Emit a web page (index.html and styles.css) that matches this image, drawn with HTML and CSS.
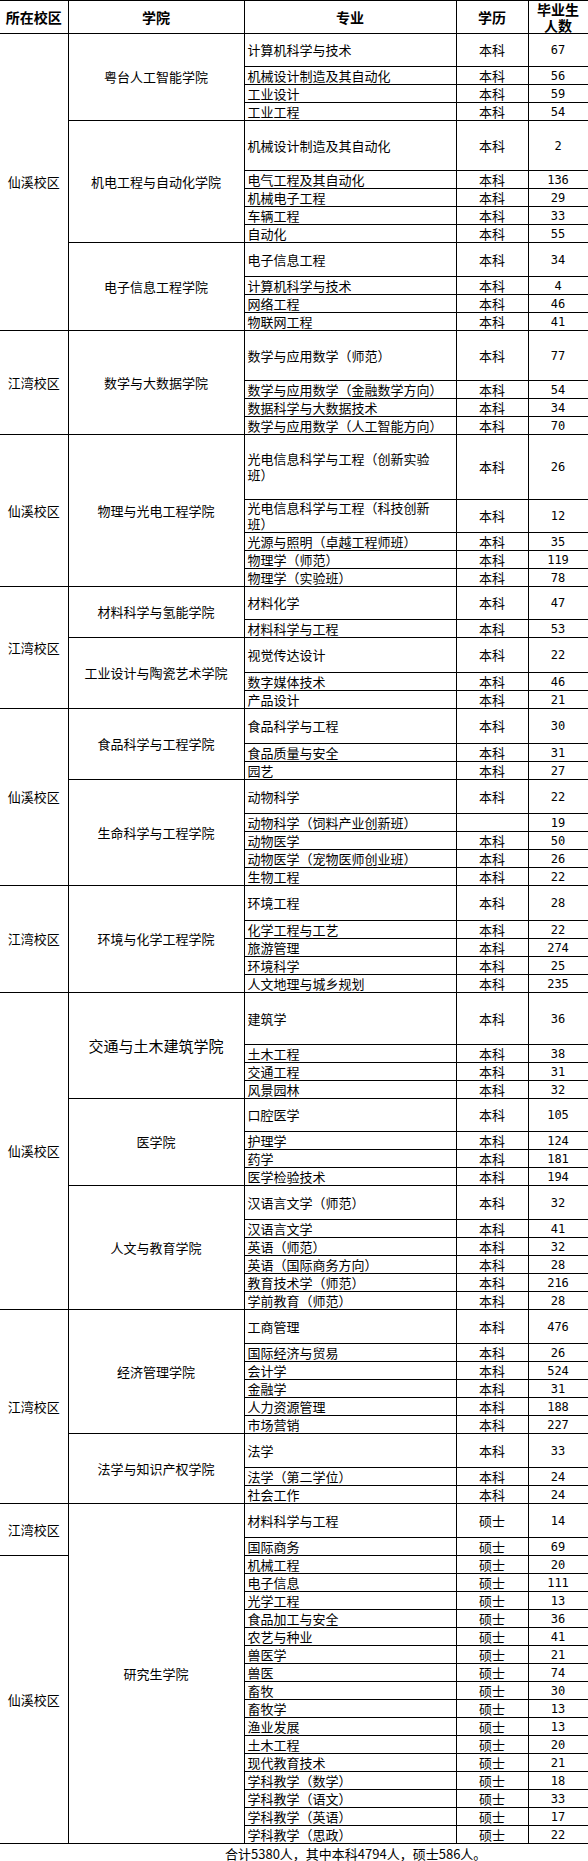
FILE: index.html
```html
<!DOCTYPE html>
<html lang="zh-CN">
<head>
<meta charset="utf-8">
<title>毕业生人数</title>
<link rel="stylesheet" href="styles.css">
</head>
<body>
<table class="grad">
<colgroup><col class="c1"><col class="c2"><col class="c3"><col class="c4"><col class="c5"></colgroup>
<thead>
<tr class="head"><th>所在校区</th><th>学院</th><th>专业</th><th>学历</th><th class="hn">毕业生<br>人数</th></tr>
</thead>
<tbody>
<tr class="h33"><td rowspan="13" class="campus">仙溪校区</td><td rowspan="4" class="college">粤台人工智能学院</td><td class="major">计算机科学与技术</td><td>本科</td><td class="num">67</td></tr>
<tr><td class="major">机械设计制造及其自动化</td><td>本科</td><td class="num">56</td></tr>
<tr><td class="major">工业设计</td><td>本科</td><td class="num">59</td></tr>
<tr><td class="major">工业工程</td><td>本科</td><td class="num">54</td></tr>
<tr class="h50"><td rowspan="5" class="college">机电工程与自动化学院</td><td class="major">机械设计制造及其自动化</td><td>本科</td><td class="num">2</td></tr>
<tr><td class="major">电气工程及其自动化</td><td>本科</td><td class="num">136</td></tr>
<tr><td class="major">机械电子工程</td><td>本科</td><td class="num">29</td></tr>
<tr><td class="major">车辆工程</td><td>本科</td><td class="num">33</td></tr>
<tr><td class="major">自动化</td><td>本科</td><td class="num">55</td></tr>
<tr class="h34"><td rowspan="4" class="college">电子信息工程学院</td><td class="major">电子信息工程</td><td>本科</td><td class="num">34</td></tr>
<tr><td class="major">计算机科学与技术</td><td>本科</td><td class="num">4</td></tr>
<tr><td class="major">网络工程</td><td>本科</td><td class="num">46</td></tr>
<tr><td class="major">物联网工程</td><td>本科</td><td class="num">41</td></tr>
<tr class="h50"><td rowspan="4" class="campus">江湾校区</td><td rowspan="4" class="college">数学与大数据学院</td><td class="major">数学与应用数学（师范）</td><td>本科</td><td class="num">77</td></tr>
<tr><td class="major">数学与应用数学（金融数学方向）</td><td>本科</td><td class="num">54</td></tr>
<tr><td class="major">数据科学与大数据技术</td><td>本科</td><td class="num">34</td></tr>
<tr><td class="major">数学与应用数学（人工智能方向）</td><td>本科</td><td class="num">70</td></tr>
<tr class="h65"><td rowspan="5" class="campus">仙溪校区</td><td rowspan="5" class="college">物理与光电工程学院</td><td class="major two">光电信息科学与工程（创新实验<br>班）</td><td>本科</td><td class="num">26</td></tr>
<tr class="h33"><td class="major two">光电信息科学与工程（科技创新<br>班）</td><td>本科</td><td class="num">12</td></tr>
<tr><td class="major">光源与照明（卓越工程师班）</td><td>本科</td><td class="num">35</td></tr>
<tr><td class="major">物理学（师范）</td><td>本科</td><td class="num">119</td></tr>
<tr><td class="major">物理学（实验班）</td><td>本科</td><td class="num">78</td></tr>
<tr class="h33"><td rowspan="5" class="campus">江湾校区</td><td rowspan="2" class="college">材料科学与氢能学院</td><td class="major">材料化学</td><td>本科</td><td class="num">47</td></tr>
<tr><td class="major">材料科学与工程</td><td>本科</td><td class="num">53</td></tr>
<tr class="h35"><td rowspan="3" class="college">工业设计与陶瓷艺术学院</td><td class="major">视觉传达设计</td><td>本科</td><td class="num">22</td></tr>
<tr><td class="major">数字媒体技术</td><td>本科</td><td class="num">46</td></tr>
<tr><td class="major">产品设计</td><td>本科</td><td class="num">21</td></tr>
<tr class="h35"><td rowspan="8" class="campus">仙溪校区</td><td rowspan="3" class="college">食品科学与工程学院</td><td class="major">食品科学与工程</td><td>本科</td><td class="num">30</td></tr>
<tr><td class="major">食品质量与安全</td><td>本科</td><td class="num">31</td></tr>
<tr><td class="major">园艺</td><td>本科</td><td class="num">27</td></tr>
<tr class="h34"><td rowspan="5" class="college">生命科学与工程学院</td><td class="major">动物科学</td><td>本科</td><td class="num">22</td></tr>
<tr><td class="major">动物科学（饲料产业创新班）</td><td></td><td class="num">19</td></tr>
<tr><td class="major">动物医学</td><td>本科</td><td class="num">50</td></tr>
<tr><td class="major">动物医学（宠物医师创业班）</td><td>本科</td><td class="num">26</td></tr>
<tr><td class="major">生物工程</td><td>本科</td><td class="num">22</td></tr>
<tr class="h35"><td rowspan="5" class="campus">江湾校区</td><td rowspan="5" class="college">环境与化学工程学院</td><td class="major">环境工程</td><td>本科</td><td class="num">28</td></tr>
<tr><td class="major">化学工程与工艺</td><td>本科</td><td class="num">22</td></tr>
<tr><td class="major">旅游管理</td><td>本科</td><td class="num">274</td></tr>
<tr><td class="major">环境科学</td><td>本科</td><td class="num">25</td></tr>
<tr><td class="major">人文地理与城乡规划</td><td>本科</td><td class="num">235</td></tr>
<tr class="h52"><td rowspan="14" class="campus">仙溪校区</td><td rowspan="4" class="college big">交通与土木建筑学院</td><td class="major">建筑学</td><td>本科</td><td class="num">36</td></tr>
<tr><td class="major">土木工程</td><td>本科</td><td class="num">38</td></tr>
<tr><td class="major">交通工程</td><td>本科</td><td class="num">31</td></tr>
<tr><td class="major">风景园林</td><td>本科</td><td class="num">32</td></tr>
<tr class="h33"><td rowspan="4" class="college">医学院</td><td class="major">口腔医学</td><td>本科</td><td class="num">105</td></tr>
<tr><td class="major">护理学</td><td>本科</td><td class="num">124</td></tr>
<tr><td class="major">药学</td><td>本科</td><td class="num">181</td></tr>
<tr><td class="major">医学检验技术</td><td>本科</td><td class="num">194</td></tr>
<tr class="h34"><td rowspan="6" class="college">人文与教育学院</td><td class="major">汉语言文学（师范）</td><td>本科</td><td class="num">32</td></tr>
<tr><td class="major">汉语言文学</td><td>本科</td><td class="num">41</td></tr>
<tr><td class="major">英语（师范）</td><td>本科</td><td class="num">32</td></tr>
<tr><td class="major">英语（国际商务方向）</td><td>本科</td><td class="num">28</td></tr>
<tr><td class="major">教育技术学（师范）</td><td>本科</td><td class="num">216</td></tr>
<tr><td class="major">学前教育（师范）</td><td>本科</td><td class="num">28</td></tr>
<tr class="h34"><td rowspan="9" class="campus">江湾校区</td><td rowspan="6" class="college">经济管理学院</td><td class="major">工商管理</td><td>本科</td><td class="num">476</td></tr>
<tr><td class="major">国际经济与贸易</td><td>本科</td><td class="num">26</td></tr>
<tr><td class="major">会计学</td><td>本科</td><td class="num">524</td></tr>
<tr><td class="major">金融学</td><td>本科</td><td class="num">31</td></tr>
<tr><td class="major">人力资源管理</td><td>本科</td><td class="num">188</td></tr>
<tr><td class="major">市场营销</td><td>本科</td><td class="num">227</td></tr>
<tr class="h34"><td rowspan="3" class="college">法学与知识产权学院</td><td class="major">法学</td><td>本科</td><td class="num">33</td></tr>
<tr><td class="major">法学（第二学位）</td><td>本科</td><td class="num">24</td></tr>
<tr><td class="major">社会工作</td><td>本科</td><td class="num">24</td></tr>
<tr class="h34"><td rowspan="2" class="campus">江湾校区</td><td rowspan="18" class="college">研究生学院</td><td class="major">材料科学与工程</td><td>硕士</td><td class="num">14</td></tr>
<tr><td class="major">国际商务</td><td>硕士</td><td class="num">69</td></tr>
<tr><td rowspan="16" class="campus">仙溪校区</td><td class="major">机械工程</td><td>硕士</td><td class="num">20</td></tr>
<tr><td class="major">电子信息</td><td>硕士</td><td class="num">111</td></tr>
<tr><td class="major">光学工程</td><td>硕士</td><td class="num">13</td></tr>
<tr><td class="major">食品加工与安全</td><td>硕士</td><td class="num">36</td></tr>
<tr><td class="major">农艺与种业</td><td>硕士</td><td class="num">41</td></tr>
<tr><td class="major">兽医学</td><td>硕士</td><td class="num">21</td></tr>
<tr><td class="major">兽医</td><td>硕士</td><td class="num">74</td></tr>
<tr><td class="major">畜牧</td><td>硕士</td><td class="num">30</td></tr>
<tr><td class="major">畜牧学</td><td>硕士</td><td class="num">13</td></tr>
<tr><td class="major">渔业发展</td><td>硕士</td><td class="num">13</td></tr>
<tr><td class="major">土木工程</td><td>硕士</td><td class="num">20</td></tr>
<tr><td class="major">现代教育技术</td><td>硕士</td><td class="num">21</td></tr>
<tr><td class="major">学科教学（数学）</td><td>硕士</td><td class="num">18</td></tr>
<tr><td class="major">学科教学（语文）</td><td>硕士</td><td class="num">33</td></tr>
<tr><td class="major">学科教学（英语）</td><td>硕士</td><td class="num">17</td></tr>
<tr><td class="major">学科教学（思政）</td><td>硕士</td><td class="num">22</td></tr>
</tbody>
</table>
<div class="total">合计5380人，其中本科4794人，硕士586人。</div>
</body>
</html>
```

FILE: styles.css
```css
html, body {
  margin: 0;
  padding: 0;
  background: #fff;
}

body {
  width: 588px;
  font-family: "Noto Sans CJK SC", "Noto Sans", sans-serif;
  font-size: 13px;
  color: #000;
}

.grad {
  width: 588px;
  table-layout: fixed;
  border-collapse: collapse;
  border: 1px solid #000;
  border-left-style: hidden;
}

.c1 { width: 68px; }
.c2 { width: 176px; }
.c3 { width: 212px; }
.c4 { width: 72px; }
.c5 { width: 60px; }

.grad th,
.grad td {
  border: 1px solid #000;
  padding: 0 2px;
  text-align: center;
  vertical-align: middle;
  line-height: 16px;
  font-weight: normal;
  white-space: nowrap;
  overflow: hidden;
}

.grad tr { height: 18px; }

.grad .head { height: 32px; }

.grad th {
  font-weight: bold;
  font-size: 14px;
  line-height: 16px;
  padding: 0;
}

.grad .major {
  text-align: left;
  padding-left: 3px;
}

.grad .two { line-height: 16px; }

.grad .num {
  font-family: "DejaVu Sans Mono", monospace;
  font-size: 12px;
}

.grad .big { font-size: 15px; }

.grad .h33 { height: 33px; }
.grad .h34 { height: 34px; }
.grad .h35 { height: 35px; }
.grad .h50 { height: 50px; }
.grad .h52 { height: 52px; }
.grad .h65 { height: 65px; }

.total {
  padding-left: 225px;
  height: 19px;
  line-height: 19px;
  font-size: 13px;
}
```
